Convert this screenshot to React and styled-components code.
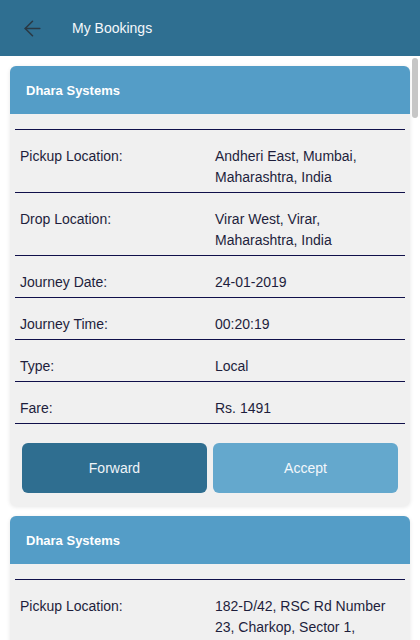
import React from "react";
import styled, { createGlobalStyle } from "styled-components";
import { ArrowLeft } from "lucide-react";

const bookings = [
  {
    company: "Dhara Systems",
    pickup: "Andheri East, Mumbai, Maharashtra, India",
    drop: "Virar West, Virar, Maharashtra, India",
    date: "24-01-2019",
    time: "00:20:19",
    type: "Local",
    fare: "Rs. 1491",
  },
  {
    company: "Dhara Systems",
    pickup: "182-D/42, RSC Rd Number 23, Charkop, Sector 1, Kandivali West, Mumbai, Maharashtra 400067, India",
    drop: "Borivali West, Mumbai, Maharashtra, India",
    date: "23-01-2019",
    time: "18:45:02",
    type: "Local",
    fare: "Rs. 620",
  },
];

const App = () => {
  return (
    <>
      <GlobalStyle />
      <Screen>
        <TopBar>
          <BackButton>
            <ArrowLeft size={25} strokeWidth={1.5} />
          </BackButton>
          <PageTitle>My Bookings</PageTitle>
        </TopBar>
        <Viewport>
          <Content>
            {bookings.map((b, i) => (
              <Card key={i}>
                <CardHeader>{b.company}</CardHeader>
                <CardBody>
                  <Divider />
                  <Row label="Pickup Location:" value={b.pickup} />
                  <Row label="Drop Location:" value={b.drop} />
                  <Row label="Journey Date:" value={b.date} />
                  <Row label="Journey Time:" value={b.time} />
                  <Row label="Type:" value={b.type} />
                  <Row label="Fare:" value={b.fare} />
                  <Actions>
                    <ActionButton $variant="dark">Forward</ActionButton>
                    <ActionButton $variant="light">Accept</ActionButton>
                  </Actions>
                </CardBody>
              </Card>
            ))}
          </Content>
          <ScrollThumb />
        </Viewport>
      </Screen>
    </>
  );
};

const Row = ({ label, value }) => (
  <InfoRow>
    <Cell>{label}</Cell>
    <Cell>{value}</Cell>
  </InfoRow>
);

const GlobalStyle = createGlobalStyle`
  html, body {
    margin: 0;
    padding: 0;
    height: 100%;
    overflow: hidden;
    background: #fff;
    font-family: "Liberation Sans", Arial, sans-serif;
  }
  #root {
    height: 100%;
  }
`;

const Screen = styled.div`
  display: flex;
  flex-direction: column;
  width: 420px;
  height: 640px;
`;

const TopBar = styled.header`
  display: flex;
  align-items: center;
  flex-shrink: 0;
  height: 56px;
  background: #2f6f91;
`;

const BackButton = styled.div`
  display: flex;
  align-items: center;
  justify-content: center;
  width: 26px;
  margin-left: 19px;
  color: #2a3944;
`;

const PageTitle = styled.div`
  margin-left: 27px;
  font-size: 14px;
  color: #f4f8fb;
`;

const Viewport = styled.div`
  position: relative;
  flex: 1;
  overflow: hidden;
`;

const Content = styled.main`
  padding: 10px;
`;

const ScrollThumb = styled.div`
  position: absolute;
  top: 2px;
  right: 2px;
  width: 6px;
  height: 60px;
  border-radius: 3px;
  background: #c6c6c6;
`;

const Card = styled.section`
  margin-bottom: 10px;
  border-radius: 6px;
  background: #f0f0f0;
  box-shadow: 0 1px 4px rgba(0, 0, 0, 0.1);
  overflow: hidden;
`;

const CardHeader = styled.div`
  display: flex;
  align-items: center;
  height: 48px;
  padding-left: 16px;
  background: #549dc7;
  color: #fff;
  font-size: 13px;
  font-weight: bold;
`;

const CardBody = styled.div`
  padding: 0 5px 13px;
`;

const Divider = styled.div`
  margin-top: 15px;
  border-bottom: 1px solid #10104a;
`;

const InfoRow = styled.div`
  display: grid;
  grid-template-columns: 1fr 1fr;
  padding: 16px 0 4px;
  border-bottom: 1px solid #10104a;
  font-size: 14px;
  line-height: 21px;
  color: #1e1e3c;
`;

const Cell = styled.div`
  padding: 0 5px;
`;

const Actions = styled.div`
  display: flex;
  gap: 6px;
  padding: 19px 7px 0;
`;

const ActionButton = styled.button`
  flex: 1;
  height: 50px;
  border: none;
  border-radius: 6px;
  background: ${(p) => (p.$variant === "dark" ? "#2f6e90" : "#64a8cd")};
  color: ${(p) => (p.$variant === "dark" ? "#eef4f8" : "#f2f7fb")};
  font-family: "Liberation Sans", Arial, sans-serif;
  font-size: 14px;
  cursor: pointer;
`;

export default App;
